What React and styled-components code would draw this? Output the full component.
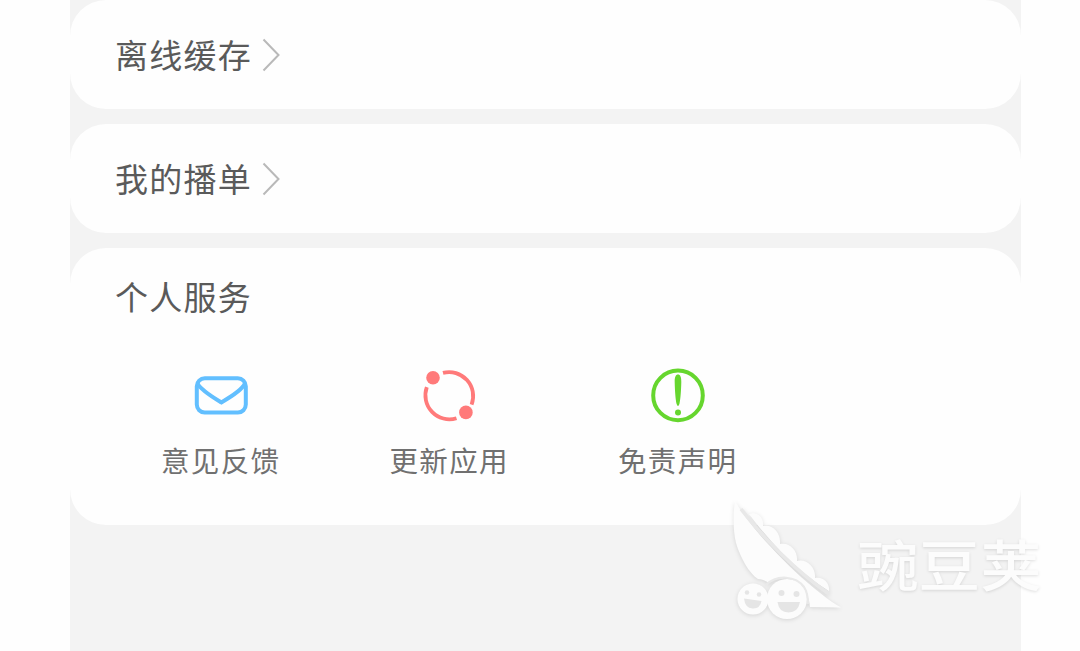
import React from "react";
import styled, { createGlobalStyle } from "styled-components";

const Global = createGlobalStyle`
  * { box-sizing: border-box; }
  html, body { margin: 0; background: #fefefe; }
  body {
    height: 651px;
    overflow: hidden;
    font-family: "Noto Sans CJK SC", "Noto Sans", sans-serif;
  }
`;

const Page = styled.main`
  position: relative;
  width: 951px;
  height: 651px;
  margin-left: 70px;
  background: #f3f3f3;
  display: flex;
  flex-direction: column;
  gap: 15px;
`;

const Card = styled.section`
  background: #fefefe;
  border-radius: 36px;
`;

const LinkCard = styled(Card)`
  height: 109.2px;
  padding: 0 0 0 45px;
  display: flex;
  align-items: center;
  gap: 10px;
`;

const ServiceCard = styled(Card)`
  height: 276.5px;
  padding: 25px 0 0 45px;
`;

const Title = styled.h2`
  margin: 0;
  padding-bottom: 2px;
  font-size: 33px;
  line-height: 46px;
  font-weight: 400;
  letter-spacing: 1.25px;
  color: #5a5a5a;
`;

const Chevron = styled.svg`
  width: 18px;
  height: 34px;
  display: block;
`;

const Services = styled.div`
  display: grid;
  grid-template-columns: repeat(3, 228.5px);
  margin: 47px 0 0 -8.6px;
`;

const Service = styled.div`
  display: flex;
  flex-direction: column;
  align-items: center;
  gap: 15px;
`;

const ServiceIcon = styled.svg`
  width: 56px;
  height: 56px;
  display: block;
`;

const Label = styled.span`
  font-size: 28.5px;
  line-height: 42px;
  letter-spacing: 1.3px;
  color: #707070;
`;

const Watermark = styled.div`
  position: absolute;
  left: 656px;
  top: 494px;
  display: flex;
  color: #fcfcfc;
`;

const Pod = styled.svg`
  width: 124px;
  height: 136px;
  filter: drop-shadow(0 1px 2px rgba(0, 0, 0, 0.12));
`;

const Brand = styled.span`
  margin: 28px 0 0 7px;
  font-size: 55px;
  line-height: 80px;
  font-weight: 500;
  letter-spacing: 0;
  white-space: nowrap;
  transform: scaleX(1.12);
  transform-origin: left;
  text-shadow: 0 1px 3px rgba(0, 0, 0, 0.13);
`;

const Arrow = () => (
  <Chevron viewBox="0 0 18 34" fill="none">
    <path d="M1.5 1.5 16.5 17 1.5 32.5" stroke="#b9b9b9" strokeWidth="2" />
  </Chevron>
);

const MailIcon = () => (
  <ServiceIcon viewBox="0 0 56 56" fill="none" stroke="#62bfff" strokeWidth="4">
    <rect x="3.8" y="10.2" width="49" height="34.4" rx="8" />
    <path d="M4.5 15.4C8 22.4 20 29.4 28.3 34.4C37 29.4 49 22.4 52 15.4" />
  </ServiceIcon>
);

const UpdateIcon = () => (
  <ServiceIcon viewBox="0 0 56 56" fill="none" stroke="#ff7a7a" strokeWidth="3.8">
    <path d="M22 4.9A24 24 0 0 1 50.6 36.6" />
    <path d="M5.8 19.2A24 24 0 0 0 35.5 50.2" />
    <circle cx="12" cy="9.8" r="6.8" fill="#ff7a7a" stroke="none" />
    <circle cx="44.9" cy="44.4" r="6.8" fill="#ff7a7a" stroke="none" />
  </ServiceIcon>
);

const NoticeIcon = () => (
  <ServiceIcon viewBox="0 0 56 56" fill="none">
    <circle cx="28" cy="27.4" r="24.8" stroke="#66d62e" strokeWidth="4" />
    <path
      d="M28 6.5C30.3 6.5 31.4 9 31.3 14C31.2 21 30.5 32 29.4 36Q28 40 26.6 36C25.5 32 24.8 21 24.7 14C24.6 9 25.7 6.5 28 6.5Z"
      fill="#66d62e"
    />
    <circle cx="28" cy="44.4" r="3" fill="#66d62e" />
  </ServiceIcon>
);

const PodLogo = () => (
  <Pod viewBox="726 494 124 136">
    <g fill="currentColor">
      <path d="M735 501C748 524 776 554 801 577C815 589 829 601 841 607.5L810 607C809 592 800 580 787 578C779 577 773 580 769 583Q763 579 758 579C749 573 741 559 736 543C733 530 733 514 735 501Z" />
      <path d="M749 514C758 511 764 518 763 526C773 524 781 533 780 544C790 542 798 551 797 561C806 558 816 567 815 578C823 576 830 583 829 591C801 574 773 546 749 514Z" />
      <circle cx="753" cy="599" r="15.5" />
      <circle cx="787" cy="599" r="20" />
    </g>
    <g fill="#e5e5e5">
      <circle cx="747" cy="592.5" r="2.2" />
      <circle cx="759" cy="594.5" r="2.2" />
      <circle cx="781.5" cy="593" r="3" />
      <circle cx="796.5" cy="594" r="3" />
      <path d="M744 598.5L761.5 601Q760 609 752.5 608.5Q745 608 744 598.5Z" />
      <path d="M777.5 602H800Q798 612.5 788.5 612.5Q779 612.5 777.5 602Z" />
    </g>
    <path d="M741 509C763 538 796 571 829 594" fill="none" stroke="#e8e8e8" strokeWidth="3.6" />
    <path d="M766 585C777 574 796 576 804 587Q808 593 808 604" fill="none" stroke="#e9e9e9" strokeWidth="2.2" />
  </Pod>
);

const services = [
  { label: "意见反馈", Icon: MailIcon },
  { label: "更新应用", Icon: UpdateIcon },
  { label: "免责声明", Icon: NoticeIcon },
];

export default function App() {
  return (
    <>
      <Global />
      <Page>
        {["离线缓存", "我的播单"].map((name) => (
          <LinkCard key={name}>
            <Title>{name}</Title>
            <Arrow />
          </LinkCard>
        ))}
        <ServiceCard>
          <Title>个人服务</Title>
          <Services>
            {services.map(({ label, Icon }) => (
              <Service key={label}>
                <Icon />
                <Label>{label}</Label>
              </Service>
            ))}
          </Services>
        </ServiceCard>
        <Watermark>
          <PodLogo />
          <Brand>豌豆荚</Brand>
        </Watermark>
      </Page>
    </>
  );
}
